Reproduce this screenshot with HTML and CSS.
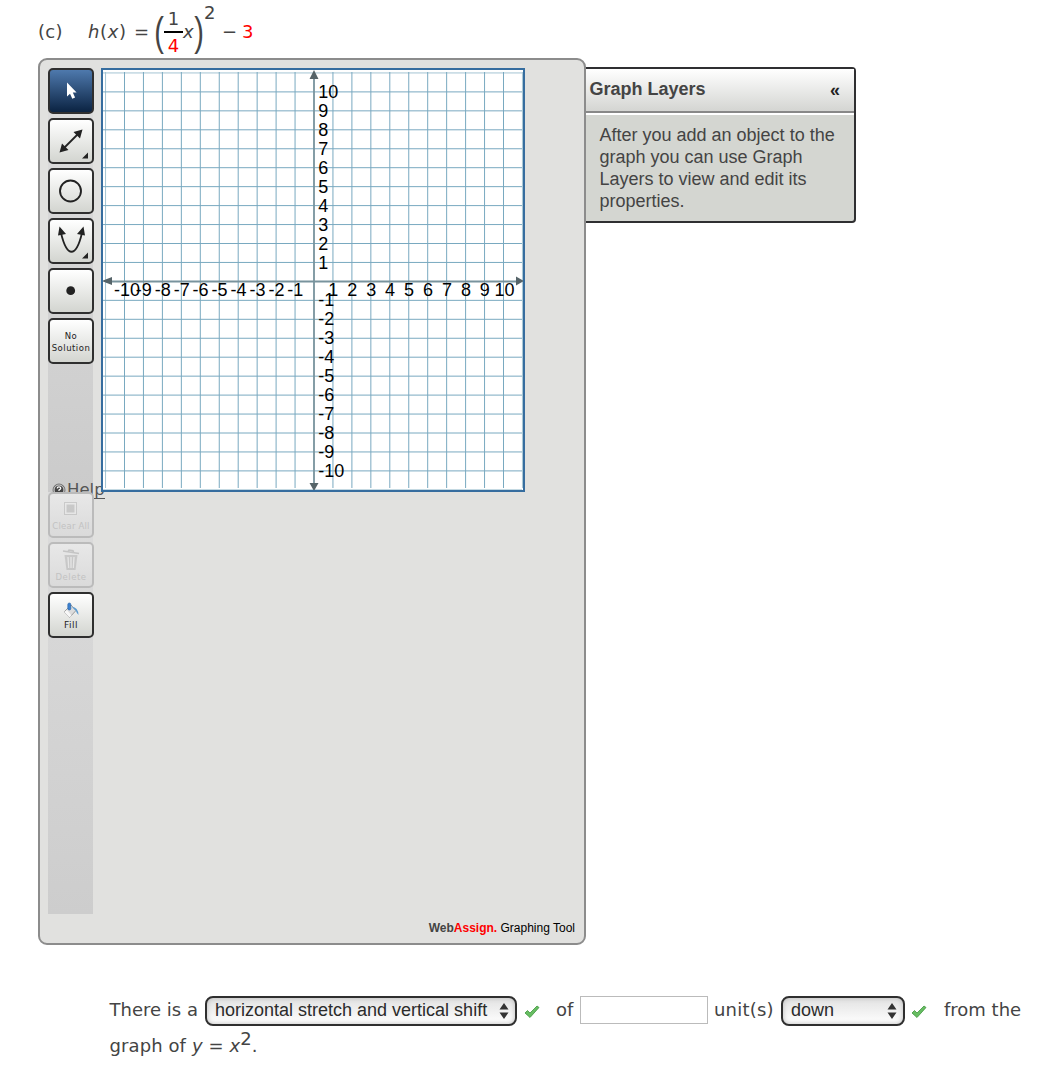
FILE: index.html
```html
<!DOCTYPE html>
<html lang="en">

<head>
    <meta charset="UTF-8">
    <meta name="viewport" content="width=device-width, initial-scale=1.0">
    <title>Graphing Tool</title>
    <link rel="stylesheet" href="styles.css">
</head>

<body>
    <div class="formula">
        <span class="part">(c)</span>
        <span class="fn"><i>h</i>(<i>x</i>)</span>
        <span class="equals">=</span>
        <span class="paren">(</span>
        <span class="fraction"><span class="num">1</span><span class="den">4</span></span>
        <i class="var">x</i>
        <span class="paren">)</span>
        <span class="power">2</span>
        <span class="minus">−</span>
        <span class="red">3</span>
    </div>

    <div class="grapher">
        <div class="tool-panel">
            <div class="workspace">
                <div class="toolbar">
                    <div class="tools">
                        <button class="tool active">
                            <svg width="42" height="42"><path d="M17 12.500v14l3-2.800 2.300 5 2.800-1.200-2.300-5h3.800z" fill="#fff"/></svg>
                        </button>
                        <button class="tool">
                            <svg width="42" height="42">
                                <path d="M13 29L29 13" stroke="#222" stroke-width="1.8"/>
                                <path d="M9.5 32.5l2.5-9 6.5 6.5zM32.5 9.5l-2.5 9-6.5-6.5zM38 32.5v6h-6z" fill="#222"/>
                            </svg>
                        </button>
                        <button class="tool">
                            <svg width="42" height="42"><circle cx="20.5" cy="21" r="10.5" fill="none" stroke="#222" stroke-width="1.9"/></svg>
                        </button>
                        <button class="tool">
                            <svg width="42" height="42">
                                <path d="M11 13C17 38 26 38 32 13" fill="none" stroke="#222" stroke-width="1.8"/>
                                <path d="M9.5 6.5l6.500 7.500-8 1.500zM33.500 6.500l1.500 9-8-1.500zM38 32.500v6h-6z" fill="#222"/>
                            </svg>
                        </button>
                        <button class="tool">
                            <svg width="42" height="42"><circle cx="20.7" cy="20.7" r="4.4" fill="#222"/></svg>
                        </button>
                        <button class="tool label">No<br>Solution</button>
                    </div>
                    <a class="help">
                        <svg width="14" height="14">
                            <circle cx="7" cy="7" r="6" fill="#444" stroke="#777"/>
                            <circle cx="7" cy="7" r="5" fill="none" stroke="#ddd"/>
                            <path d="M5.2 5.5q0-1.7 1.8-1.7t1.8 1.5q0 .8-1.800 1.800v1M7 9v1.300" fill="none" stroke="#fff" stroke-width="1.2"/>
                        </svg>
                        <span>Help</span>
                    </a>
                    <div class="actions">
                        <button class="tool disabled clear">
                            <svg width="16" height="16">
                                <rect x="1.5" y="1.5" width="12" height="12" fill="#eee" stroke="#999"/>
                                <rect x="3.5" y="3.5" width="8" height="8" fill="#999"/>
                            </svg>
                            <span>Clear All</span>
                        </button>
                        <button class="tool disabled delete">
                            <svg width="18" height="22">
                                <path d="M1 2l16 2.500M6 2.500l1-1.500 4 .7.500 1.600" fill="none" stroke="#888" stroke-width="1.5"/>
                                <path d="M2.500 6h13l-2 15h-9z" fill="#999"/>
                                <path d="M6 8l.7 11M9 8v11M12 8l-.7 11" stroke="#eee" stroke-width="1.3"/>
                            </svg>
                            <span>Delete</span>
                        </button>
                        <button class="tool fill">
                            <svg width="18" height="17">
                                <path d="M2 10l7-7 5 5.500-6.500 7z" fill="#ddd" stroke="#888" stroke-width=".8"/>
                                <path d="M2 10l5.500 5.500 2-2L5 8z" fill="#f7f7f7"/>
                                <path d="M10 5q6 0 6.500 8-2-2-2.500-4z" fill="#5b9bd0"/>
                                <rect x="5.800" y="1" width="3" height="7" rx="1.500" fill="#3d80cf" stroke="#225fa5" stroke-width=".6"/>
                            </svg>
                            <span>Fill</span>
                        </button>
                    </div>
                </div>
                <svg class="graph" id="graph" width="420" height="420">
                    <g id="grid"></g>
                    <path class="axis" d="M211 3v414M3 211.500h414"/>
                    <path class="arrow" d="M211 0l4.500 9h-9zM211 421l4.500-8h-9zM-1 211l10-4v8zM421 211l-8-4.500v9z"/>
                    <g id="labels"></g>
                </svg>
            </div>
            <div class="brand"><b>Web<span class="red">Assign.</span></b> Graphing Tool</div>
        </div>

        <div class="layers">
            <div class="layers-header">
                <h2>Graph Layers</h2>
                <span class="collapse">«</span>
            </div>
            <p>After you add an object to the graph you can use Graph Layers to view and edit its properties.</p>
        </div>
    </div>

    <div class="answer">
        <div class="answer-row">
            <span class="there">There is a</span>
            <div class="select wide">horizontal stretch and vertical shift
                <svg width="10" height="18"><path d="M.5 7.500l4.500-6.500 4.500 6.500zM.5 10.500h9l-4.500 6.500z" fill="#333"/></svg>
            </div>
            <svg class="check" width="16" height="14"><path d="M1 8l2.500-2.500 2.500 2.500 7-7 2 1.500-9 10z" fill="#67bd62" stroke="#3f963d" stroke-width=".8"/></svg>
            <span class="of">of</span>
            <input class="units" type="text">
            <span class="unit-label">unit(s)</span>
            <div class="select narrow">down
                <svg width="10" height="18"><path d="M.5 7.500l4.500-6.500 4.500 6.500zM.5 10.500h9l-4.500 6.500z" fill="#333"/></svg>
            </div>
            <svg class="check second" width="16" height="14"><path d="M1 8l2.500-2.500 2.500 2.500 7-7 2 1.500-9 10z" fill="#67bd62" stroke="#3f963d" stroke-width=".8"/></svg>
            <span class="from">from the</span>
        </div>
        <div class="answer-end">graph of <i>y</i> = <i>x</i><sup>2</sup>.</div>
    </div>

    <script>
        const step = 18.95;
        const center = 211;
        let lines = "";
        let labels = "";

        for (let n = -11; n <= 11; n++) {
            const pos = center + n * step;
            const edge = Math.abs(n) === 11 ? " edge" : "";
            if (n !== 0) {
                lines += `<path class="line${edge}" d="M${pos} 2V418M0 ${pos + 0.4}H419"/>`;
            }
            if (n !== 0 && !edge) {
                const shift = n === -10 ? 2.5 : n === 10 ? 1 : 0.3;
                labels += `<text x="${pos + shift}" y="226" text-anchor="middle">${n}</text>`;
                labels += `<text x="215.3" y="${center - n * step + 6.5}">${n}</text>`;
            }
        }

        document.getElementById("grid").innerHTML = lines;
        document.getElementById("labels").innerHTML = labels;
    </script>
</body>

</html>
```
FILE: styles.css
```css
* {
    margin: 0;
    padding: 0;
    box-sizing: border-box;
}

body {
    font-family: Verdana, "DejaVu Sans", sans-serif;
    font-size: 18px;
    color: #444;
    background: #fff;
}

.red {
    color: #f00;
}

/* formula */
.formula {
    display: flex;
    align-items: center;
    height: 58px;
    padding: 5px 0 0 38px;
    line-height: 24px;
    white-space: nowrap;
}

.part {
    width: 50px;
    letter-spacing: 0.3px;
}

.fn {
    width: 46px;
    letter-spacing: 0.6px;
}

.equals {
    width: 22px;
}

.paren {
    width: 8px;
    font-family: "Liberation Sans", Arial, sans-serif;
    font-size: 20px;
    transform: scale(1.45, 2);
}

.fraction {
    display: flex;
    flex-direction: column;
    width: 19px;
    padding-top: 1px;
    text-align: center;
}

.num {
    border-bottom: 2px solid #000;
}

.den {
    line-height: 25px;
    color: #f00;
}

.var {
    width: 13px;
}

.power {
    width: 18px;
    padding-bottom: 38px;
}

.minus {
    width: 20px;
}

/* graphing tool */
.grapher {
    display: flex;
    align-items: flex-start;
}

.tool-panel {
    width: 548px;
    height: 887px;
    margin-left: 38px;
    padding: 8px;
    background: #e1e1df;
    border: 2px solid #8c8c8c;
    border-radius: 9px;
}

.workspace {
    display: flex;
    gap: 8px;
    height: 846px;
}

.toolbar {
    width: 45px;
    flex-shrink: 0;
    background: linear-gradient(#dedede 0, #cbcbcb 424px, #dcdcdc 424px, #cdcdcd 100%);
}

.tools {
    display: flex;
    flex-direction: column;
    gap: 4px;
    height: 411px;
}

.tool {
    display: flex;
    flex-direction: column;
    flex-shrink: 0;
    align-items: center;
    justify-content: center;
    width: 46px;
    height: 46px;
    font: 9px/12px "DejaVu Sans", sans-serif;
    letter-spacing: 0.5px;
    white-space: nowrap;
    color: #222;
    background: linear-gradient(#fff, #d3d5d0);
    border: 2px solid #2f2f2f;
    border-radius: 5px;
}

.tool.active {
    background: linear-gradient(#4e79ad, #0b2342);
}

.tool.label {
    padding-top: 2px;
    font-size: 8.5px;
}

.help {
    display: flex;
    width: 60px;
    height: 13px;
    padding-left: 4px;
    font-size: 16.5px;
    line-height: 22px;
    color: #555;
}

.help span {
    height: 20px;
    margin-left: 1px;
    border-bottom: 1px solid #555;
}

.help svg {
    margin-top: 4px;
}

.actions {
    display: flex;
    position: relative;
    flex-direction: column;
    gap: 4px;
}

.tool.disabled {
    color: #c2c2c2;
    background: linear-gradient(#e8e8e8, #dadada);
    border-color: #bbb;
}

.disabled svg {
    opacity: 0.35;
}

.tool.clear {
    padding-top: 3px;
    gap: 3px;
    font-size: 8.5px;
    letter-spacing: 0.2px;
}

.tool.delete,
.tool.fill {
    padding-top: 2px;
}

.tool.delete {
    font-size: 8.5px;
}

.graph {
    position: relative;
    flex-shrink: 0;
    box-sizing: content-box;
    background: #fff;
    border: 2px solid #366d9f;
    font: 18px "Liberation Sans", Arial, sans-serif;
}

.line {
    stroke: #79a9c0;
    stroke-width: 1;
}

.line.edge {
    stroke: #a5c5d3;
}

.axis {
    stroke: #78939d;
    stroke-width: 1.8;
}

.arrow {
    fill: #566469;
}

.brand {
    padding: 7px 1px 0 0;
    font: 12px/14px "Liberation Sans", Arial, sans-serif;
    text-align: right;
    color: #000;
}

.brand b {
    color: #444;
}

.brand b .red {
    color: #f00;
}

/* layers panel */
.layers {
    width: 270px;
    height: 156px;
    margin-top: 9px;
    font-family: "Liberation Sans", Arial, sans-serif;
    border: 2px solid #2f2f31;
    border-left: none;
    border-radius: 0 4px 4px 0;
    background: #d4d6d1;
}

.layers-header {
    display: flex;
    align-items: center;
    justify-content: space-between;
    height: 44px;
    padding: 0 14px 1px 3.5px;
    background: linear-gradient(#fff, #d4d5d2);
    border-bottom: 2px solid #888;
}

.layers h2 {
    font-size: 18px;
}

.collapse {
    padding-top: 1px;
    font-size: 18px;
    font-weight: bold;
    color: #222;
}

.layers p {
    padding: 9px 12px 0 13.5px;
    border-top: 2px solid #fff;
    font-size: 18px;
    line-height: 22px;
}

/* answer */
.answer {
    padding: 50px 0 0 109.5px;
}

.answer-row {
    display: flex;
    height: 32px;
    line-height: 30px;
    white-space: nowrap;
}

.there {
    width: 95.5px;
}

.select {
    display: flex;
    justify-content: space-between;
    height: 30px;
    margin-top: 1px;
    padding: 0 6px 0 8px;
    font: 18px/25px "Liberation Sans", Arial, sans-serif;
    color: #2b2b2b;
    background: linear-gradient(#e2e2e2, #fff);
    border: 2px solid #2f2f2f;
    border-radius: 8px;
    box-shadow: inset 0 0 5px #bbb;
}

.select svg {
    margin-top: 4px;
}

.wide {
    width: 312px;
}

.narrow {
    width: 124px;
}

.check {
    margin: 10px 16px 0 7px;
}

.of {
    width: 24px;
}

.units {
    width: 128px;
    height: 28px;
    margin-top: 1px;
    border: 1px solid #bbb;
}

.unit-label {
    width: 67px;
    margin-left: 6px;
    letter-spacing: 0.2px;
}

.check.second {
    margin: 10px 17px 0 6px;
}

.answer-end {
    padding-top: 2px;
    line-height: 34px;
    letter-spacing: 0.1px;
}

.answer-end sup {
    font-size: 18px;
    line-height: 0;
}
```
